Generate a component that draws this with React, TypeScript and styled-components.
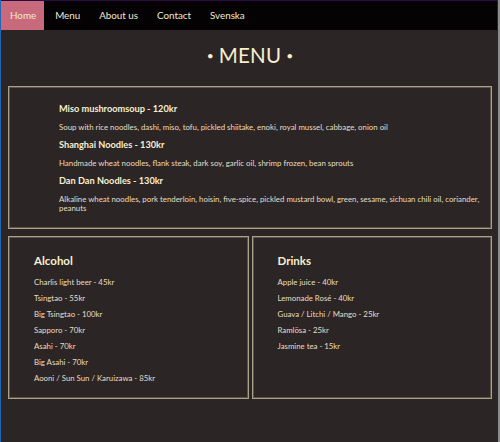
import React from "react";
import styled, { createGlobalStyle } from "styled-components";

const Global = createGlobalStyle`
  html, body { margin: 0; padding: 0; background: #2b2526; }
  body { font-family: Lato, "Noto Sans", sans-serif; }
  * { box-sizing: border-box; }
`;

const Page = styled.div`
  height: 442px;
  background: #2b2526;
  border-left: 1px solid #2566b0;
  border-right: 2px solid #8d8d8d;
  overflow: hidden;
`;

const Nav = styled.nav`
  display: flex;
  gap: 2px;
  height: 30px;
  background: #050203;
  border-top: 1px solid #2c0a45;
  margin-right: 1px;
`;

const NavItem = styled.a<{ $active?: boolean }>`
  display: flex;
  align-items: center;
  padding: 0 8px 1px 9px;
  font-size: 9.8px;
  color: #f1e9d2;
  text-decoration: none;
  background: ${(p) => (p.$active ? "#c86a7b" : "transparent")};
`;

const Content = styled.main`
  padding: 0 6px 0 7px;
`;

const Title = styled.h1`
  margin: 11px 0 16px;
  text-align: center;
  font-size: 20.5px;
  line-height: 28px;
  font-weight: 400;
  color: #f8efcf;
  letter-spacing: 0.2px;
`;

const Dot = styled.span`
  font-size: 12px;
  vertical-align: 3px;
  margin: 0 5px;
`;

const Box = styled.section`
  border: 1px solid #a8a28c;
  box-shadow: inset 0 0 0 1px #5c5647;
`;

const MainBox = styled(Box)`
  padding: 15px 4px 15px 50px;
`;

const Dish = styled.h3`
  margin: 0 0 7px;
  font-size: 9.2px;
  line-height: 14px;
  font-weight: 700;
  color: #f8efcf;
`;

const Desc = styled.p`
  margin: 0 0 6px;
  font-size: 7.85px;
  line-height: 9px;
  color: #e8dec2;
  &:last-child { margin-bottom: 0; }
`;

const Grid = styled.div`
  display: grid;
  grid-template-columns: 1fr 1fr;
  gap: 3px;
  margin-top: 7px;
`;

const SubBox = styled(Box)`
  padding: 16px 20px 12px 25px;
`;

const SubTitle = styled.h2`
  margin: 0 0 5px;
  font-size: 11.5px;
  line-height: 16px;
  font-weight: 700;
  color: #f8efcf;
`;

const List = styled.ul`
  list-style: none;
  margin: 0;
  padding: 0;
`;

const Item = styled.li`
  font-size: 7.8px;
  line-height: 16px;
  color: #e8dec2;
`;

const dishes = [
  {
    name: "Miso mushroomsoup - 120kr",
    desc: "Soup with rice noodles, dashi, miso, tofu, pickled shiitake, enoki, royal mussel, cabbage, onion oil",
  },
  {
    name: "Shanghai Noodles - 130kr",
    desc: "Handmade wheat noodles, flank steak, dark soy, garlic oil, shrimp frozen, bean sprouts",
  },
  {
    name: "Dan Dan Noodles - 130kr",
    desc: "Alkaline wheat noodles, pork tenderloin, hoisin, five-spice, pickled mustard bowl, green, sesame, sichuan chili oil, coriander, peanuts",
  },
];

const alcohol = [
  "Charlis light beer - 45kr",
  "Tsingtao - 55kr",
  "Big Tsingtao - 100kr",
  "Sapporo - 70kr",
  "Asahi - 70kr",
  "Big Asahi - 70kr",
  "Aooni / Sun Sun / Karuizawa - 85kr",
];

const drinks = [
  "Apple juice - 40kr",
  "Lemonade Rosé - 40kr",
  "Guava / Litchi / Mango - 25kr",
  "Ramlösa - 25kr",
  "Jasmine tea - 15kr",
];

const SecondTitle = styled(Title)`
  margin-top: 40px;
`;

export default function App() {
  return (
    <>
      <Global />
      <Page>
        <Nav>
          <NavItem $active href="#">Home</NavItem>
          <NavItem href="#">Menu</NavItem>
          <NavItem href="#">About us</NavItem>
          <NavItem href="#">Contact</NavItem>
          <NavItem href="#">Svenska</NavItem>
        </Nav>
        <Content>
          <Title>
            <Dot>•</Dot>MENU<Dot>•</Dot>
          </Title>
          <MainBox>
            {dishes.map((d) => (
              <React.Fragment key={d.name}>
                <Dish>{d.name}</Dish>
                <Desc>{d.desc}</Desc>
              </React.Fragment>
            ))}
          </MainBox>
          <Grid>
            <SubBox>
              <SubTitle>Alcohol</SubTitle>
              <List>
                {alcohol.map((a) => (
                  <Item key={a}>{a}</Item>
                ))}
              </List>
            </SubBox>
            <SubBox>
              <SubTitle>Drinks</SubTitle>
              <List>
                {drinks.map((a) => (
                  <Item key={a}>{a}</Item>
                ))}
              </List>
            </SubBox>
          </Grid>
          <SecondTitle>
            <Dot>•</Dot>ABOUT US<Dot>•</Dot>
          </SecondTitle>
        </Content>
      </Page>
    </>
  );
}
